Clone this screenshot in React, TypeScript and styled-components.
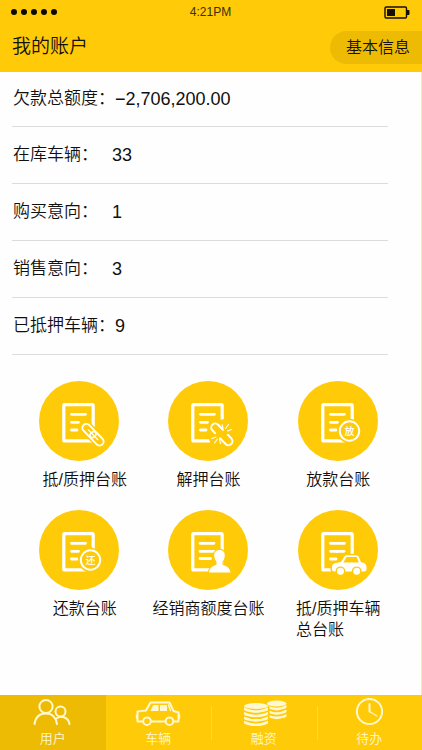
import React from "react";
import styled, { createGlobalStyle } from "styled-components";

const YELLOW = "#ffca08";
const YELLOW_DARK = "#eebb04";
const CREAM = "#fff8d0";

const GlobalStyle = createGlobalStyle`
  *, *::before, *::after { box-sizing: border-box; }
  body {
    margin: 0;
    background: #fefefe;
    color: #12100e;
    font-family: "Liberation Sans", "Noto Sans CJK SC", sans-serif;
    font-weight: 350;
  }
  button { font: inherit; color: inherit; border: 0; background: none; padding: 0; cursor: pointer; }
`;

const Page = styled.div`
  display: flex;
  flex-direction: column;
  min-height: 100vh;
`;

const Header = styled.header`
  background: ${YELLOW};
  padding-bottom: 8px;
`;

const StatusBar = styled.div`
  display: grid;
  grid-template-columns: 1fr auto 1fr;
  align-items: center;
  height: 24px;
  padding: 0 12px 0 11px;
  font-size: 12px;
  color: #3a2f0a;
`;

const Signal = styled.div`
  display: flex;
  gap: 4px;
`;

const Dot = styled.span`
  width: 6px;
  height: 6px;
  border-radius: 50%;
  background: #0c0a02;
`;

const Battery = styled.svg`
  justify-self: end;
  display: block;
`;

const TitleBar = styled.div`
  display: flex;
  align-items: center;
  justify-content: space-between;
  height: 40px;
  padding: 7px 0 0 12px;
`;

const Title = styled.h1`
  margin: 0;
  font-size: 19px;
  line-height: 24px;
  font-weight: inherit;
  padding-bottom: 2px;
`;

const InfoButton = styled.button`
  height: 33px;
  padding: 0 12px 0 16px;
  border-radius: 17px 0 0 17px;
  background: ${YELLOW_DARK};
  font-size: 16px;
  line-height: 33px;
`;

const Main = styled.main`
  flex: 1;
  border-right: 1px solid #fdeba0;
`;

const Summary = styled.dl`
  margin: 0 33px 0 12px;
`;

const SummaryRow = styled.div`
  display: flex;
  align-items: center;
  height: 57px;
  padding-left: 1px;
  border-bottom: 1px solid #dcdcdc;

  &:first-child { height: 55px; }
`;

const SummaryLabel = styled.dt`
  min-width: 99px;
  font-size: 17px;
  line-height: 24px;
`;

const SummaryValue = styled.dd`
  margin: 0;
  font-size: 18px;
  line-height: 24px;
`;

const Ledgers = styled.section`
  display: grid;
  grid-template-columns: repeat(3, 1fr);
  align-items: start;
  row-gap: 20px;
  padding: 26px 18px 24px 14px;
`;

const LedgerButton = styled.button`
  display: flex;
  flex-direction: column;
  align-items: center;
  gap: 8px;

  &:nth-child(3n + 1) > span { padding-left: 12px; }
`;

const LedgerLabel = styled.span`
  font-size: 16px;
  line-height: 21px;
  text-align: left;
  white-space: pre;
`;

const LedgerSvg = styled.svg`
  display: block;
  width: 80px;
  height: 80px;
`;

const TabBar = styled.nav`
  position: sticky;
  bottom: 0;
  display: grid;
  grid-template-columns: repeat(4, 1fr);
  background: ${YELLOW};
`;

const Tab = styled.button<{ $active?: boolean; $divided?: boolean }>`
  display: flex;
  flex-direction: column;
  align-items: center;
  gap: 4px;
  height: 55px;
  padding-top: 3px;
  color: ${CREAM};
  font-size: 13px;
  line-height: 17px;
  background: ${(p) =>
    p.$active
      ? YELLOW_DARK
      : p.$divided
        ? `linear-gradient(#f9d552, #f9d552) left center / 1px 34px no-repeat`
        : "none"};
`;

const TabSvg = styled.svg`
  display: block;
  width: 46px;
  height: 28px;
  fill: none;
  stroke: ${CREAM};
  stroke-width: 2;
  stroke-linecap: round;
  stroke-linejoin: round;
`;

type LedgerKind = "linked" | "unlinked" | "lend" | "repay" | "dealer" | "car";

const Stamp = ({ char }: { char: string }) => (
  <>
    <circle cx="51.5" cy="50" r="12.3" fill={YELLOW} />
    <circle cx="51.5" cy="50" r="9.7" fill="none" stroke="#fff" strokeWidth="2" />
    <text
      x="51.5"
      y="53.8"
      textAnchor="middle"
      fontSize="10"
      fontWeight="500"
      fontFamily="'Noto Sans CJK SC', sans-serif"
      fill="#fff"
    >
      {char}
    </text>
  </>
);

const overlays: Record<LedgerKind, React.ReactNode> = {
  linked: (
    <g transform="translate(54 53.7) rotate(46)" fill="none">
      <rect x="-13" y="-4.4" width="26" height="8.8" rx="4.4" fill={YELLOW} stroke={YELLOW} strokeWidth="4" />
      <rect x="-13.5" y="-4" width="16" height="8" rx="4" stroke="#fff" strokeWidth="1.9" />
      <rect x="-2.5" y="-4" width="16" height="8" rx="4" stroke="#fff" strokeWidth="1.9" />
      <path d="M-7 0H7" stroke="#fff" strokeWidth="1.2" strokeLinecap="round" />
    </g>
  ),
  unlinked: (
    <>
      <path d="M44 42L58 40L66 50L62 66H46L43 58Z" fill={YELLOW} stroke={YELLOW} strokeWidth="4" />
      <g transform="translate(53.5 53) rotate(46)" fill="none" stroke="#fff" strokeWidth="2" strokeLinecap="round">
        <path d="M-2 -4H-9A4 4 0 0 0 -9 4H-5" />
        <path d="M2 4H10A4 4 0 0 0 10 -4H5" />
      </g>
      <path
        d="M55 47L54 43.5M57.5 47.5L60.5 43.5M59.5 50L63.5 48.5M51.5 58.5L52.5 62.5M49.5 58L46.5 62M48 56L44 57.5"
        fill="none"
        stroke="#fff"
        strokeWidth="1.1"
        strokeLinecap="round"
      />
    </>
  ),
  lend: <Stamp char="放" />,
  repay: <Stamp char="还" />,
  dealer: (
    <path
      d="M51.5 40C47.8 40 45.8 42.6 46.2 46C46.5 48.6 47.3 50.3 48.5 51.5V54.5C46.5 56 41.5 56.5 41 62.5H62.5C62 56.5 56.5 56 54.5 54.5V51.5C55.7 50.3 56.5 48.6 56.8 46C57.2 42.6 55.2 40 51.5 40Z"
      fill="#fff"
      stroke={YELLOW}
      strokeWidth="2.4"
      paintOrder="stroke"
    />
  ),
  car: (
    <>
      <path
        d="M34 57Q34 53.5 38 53L43 52L46.5 46.5Q47.2 45.3 49 45.3H58Q60 45.3 60.7 46.8L63 52.3Q68.5 53 68.5 57V59.5Q68.5 61.5 66 61.5H36.5Q34 61.5 34 59.5Z"
        fill="#fff"
        stroke={YELLOW}
        strokeWidth="3"
        paintOrder="stroke"
      />
      <path d="M48.5 47H58.8L60.8 52.6H45.4Z" fill={YELLOW} />
      <g fill="#fff" stroke={YELLOW} strokeWidth="1.4">
        <circle cx="42.5" cy="61.3" r="4.2" />
        <circle cx="58.7" cy="61.3" r="4.2" />
      </g>
    </>
  ),
};

const LedgerIcon = ({ kind }: { kind: LedgerKind }) => (
  <LedgerSvg viewBox="0 0 80 80" aria-hidden="true">
    <circle cx="40" cy="40" r="40" fill={YELLOW} />
    <rect x="24.8" y="23.7" width="29.4" height="36.2" rx="1" fill="none" stroke="#fff" strokeWidth="3.2" />
    <path
      d={kind === "dealer" ? "M32 33.3H46M32 41.3H46M32 48.5H42.5" : "M32.5 33.3H46.5M32.5 41.3H39.5M32.5 49H38"}
      fill="none"
      stroke="#fff"
      strokeWidth="2.8"
      strokeLinecap="round"
    />
    {kind === "car" && <path d="M38 41.3H46" stroke="#fff" strokeWidth="2.8" strokeLinecap="round" />}
    {overlays[kind]}
  </LedgerSvg>
);

const UsersIcon = () => (
  <TabSvg viewBox="0 0 46 28" aria-hidden="true">
    <circle cx="16" cy="8.5" r="6.6" />
    <path d="M4.5 26C5.5 19 10 15.5 16 15.5S26 19 27 26" />
    <circle cx="30.5" cy="13.5" r="5" />
    <path d="M26.5 20.3C32 17 38.5 19.5 39.5 26" />
  </TabSvg>
);

const CarIcon = () => (
  <TabSvg viewBox="0 0 46 28" aria-hidden="true">
    <path d="M7.5 23.5H2.5V13.5L11 12.5L15.5 4.5H34.5L38.5 13L43.5 14.5V23.5H39M16.5 23.5H30" />
    <path d="M15.5 13L18 7H23.5V13ZM25 7H32V13H25Z" fill={CREAM} stroke="none" />
    <path d="M33.5 7L35.5 12.5M1.5 17V20M44.5 17V20" strokeWidth="1.4" />
    <circle cx="12" cy="23.2" r="3.8" />
    <circle cx="34.5" cy="23.2" r="3.8" />
  </TabSvg>
);

const CoinStack = ({ x, y, count, width }: { x: number; y: number; count: number; width: number }) => (
  <g fill={CREAM} stroke="none">
    <ellipse cx={x + width / 2} cy={y + 3} rx={width / 2} ry="3" />
    {Array.from({ length: count }, (_, i) => {
      const top = y + 4.6 + i * 4.4;
      return (
        <path
          key={i}
          d={`M${x} ${top}Q${x + width / 2} ${top + 5.4} ${x + width} ${top}V${top + 2}Q${x + width} ${top + 3.4} ${x + width - 4} ${top + 4.2}Q${x + width / 2} ${top + 6.4} ${x + 4} ${top + 4.2}Q${x} ${top + 3.4} ${x} ${top + 2}Z`}
        />
      );
    })}
  </g>
);

const CoinsIcon = () => (
  <TabSvg viewBox="0 0 46 28" aria-hidden="true">
    <CoinStack x={26} y={2.5} count={3} width={19.5} />
    <path d="M1 8.5Q15 -1 28.5 8.5V26H1Z" fill={YELLOW} stroke="none" />
    <CoinStack x={3} y={5} count={4} width={24} />
  </TabSvg>
);

const ClockIcon = () => (
  <TabSvg viewBox="0 0 46 28" aria-hidden="true">
    <circle cx="23.5" cy="13.5" r="12.6" />
    <path d="M23.5 6V13.5" />
    <path d="M23.5 13.5L31 18" strokeWidth="1.3" />
  </TabSvg>
);

const summary = [
  { label: "欠款总额度：", value: "−2,706,200.00" },
  { label: "在库车辆：", value: "33" },
  { label: "购买意向：", value: "1" },
  { label: "销售意向：", value: "3" },
  { label: "已抵押车辆：", value: "9" },
];

const ledgers: { kind: LedgerKind; label: string }[] = [
  { kind: "linked", label: "抵/质押台账" },
  { kind: "unlinked", label: "解押台账" },
  { kind: "lend", label: "放款台账" },
  { kind: "repay", label: "还款台账" },
  { kind: "dealer", label: "经销商额度台账" },
  { kind: "car", label: "抵/质押车辆\n总台账" },
];

export default function App() {
  return (
    <Page>
      <GlobalStyle />
      <Header>
        <StatusBar>
          <Signal>
            {[0, 1, 2, 3, 4].map((i) => (
              <Dot key={i} />
            ))}
          </Signal>
          <span>4:21PM</span>
          <Battery width="26" height="13" viewBox="0 0 26 13" aria-hidden="true">
            <rect x="1" y="1" width="21.5" height="11" rx="1.2" fill="none" stroke="#141003" strokeWidth="1.4" />
            <rect x="3" y="3" width="8" height="7" fill="#141003" />
            <path d="M23 4H24.5Q25.5 4 25.5 5V8Q25.5 9 24.5 9H23Z" fill="#141003" />
          </Battery>
        </StatusBar>
        <TitleBar>
          <Title>我的账户</Title>
          <InfoButton type="button">基本信息</InfoButton>
        </TitleBar>
      </Header>

      <Main>
        <Summary>
          {summary.map((row) => (
            <SummaryRow key={row.label}>
              <SummaryLabel>{row.label}</SummaryLabel>
              <SummaryValue>{row.value}</SummaryValue>
            </SummaryRow>
          ))}
        </Summary>
        <Ledgers>
          {ledgers.map((item) => (
            <LedgerButton key={item.kind} type="button">
              <LedgerIcon kind={item.kind} />
              <LedgerLabel>{item.label}</LedgerLabel>
            </LedgerButton>
          ))}
        </Ledgers>
      </Main>

      <TabBar>
        <Tab type="button" $active aria-current="page">
          <UsersIcon />
          用户
        </Tab>
        <Tab type="button">
          <CarIcon />
          车辆
        </Tab>
        <Tab type="button" $divided>
          <CoinsIcon />
          融资
        </Tab>
        <Tab type="button" $divided>
          <ClockIcon />
          待办
        </Tab>
      </TabBar>
    </Page>
  );
}
